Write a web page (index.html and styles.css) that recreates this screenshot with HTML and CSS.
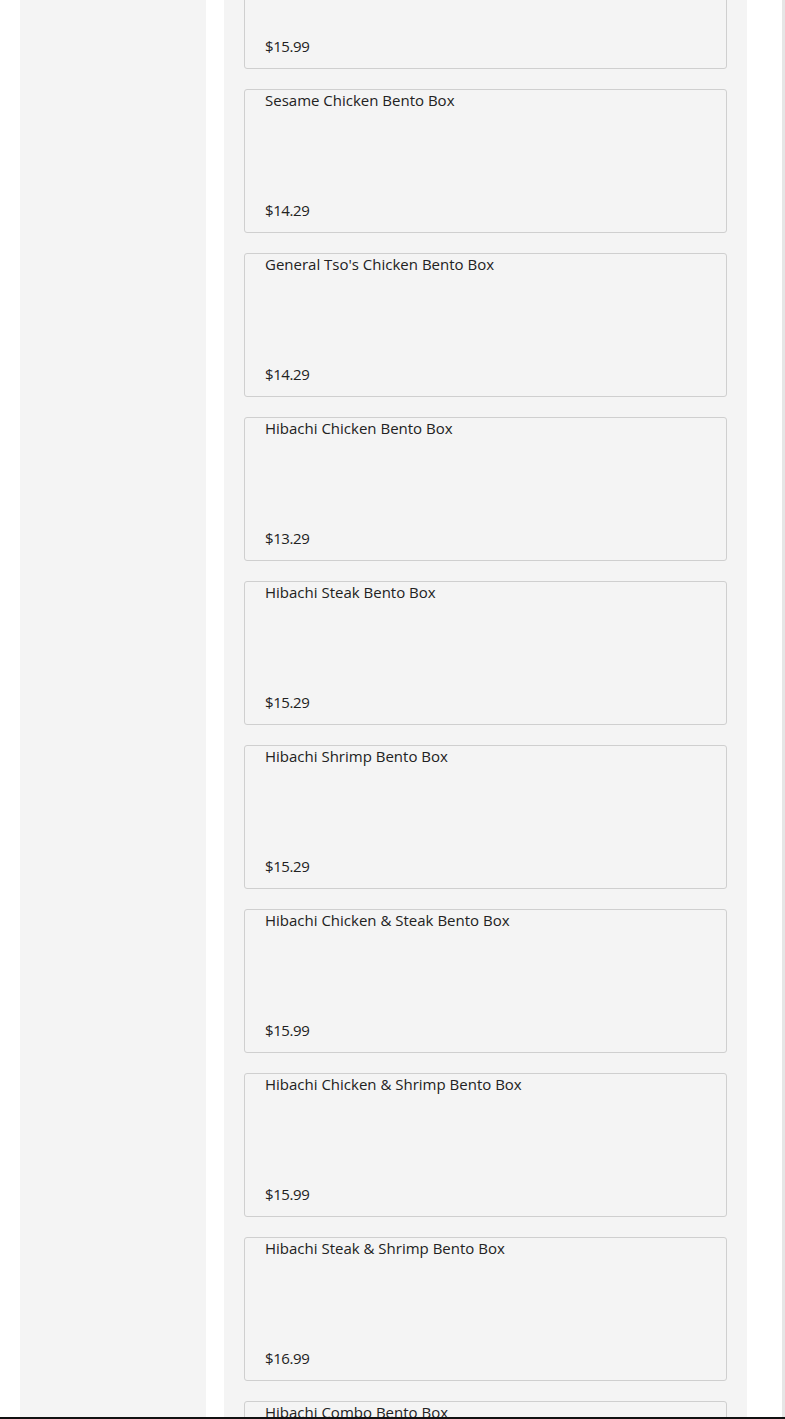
FILE: index.html
```html
<!DOCTYPE html>
<html lang="en">
<head>
    <meta charset="UTF-8">
    <title>Bento Boxes</title>
    <link rel="stylesheet" href="styles.css">
</head>
<body>
<div class="page">
    <aside class="sidebar"></aside>

    <main class="menu-section">
        <div class="item-list">
            <div class="item-card">
                <div class="item-name">Chicken &amp; Shrimp Bento Box</div>
                <div class="item-price">$15.99</div>
            </div>
            <div class="item-card">
                <div class="item-name">Sesame Chicken Bento Box</div>
                <div class="item-price">$14.29</div>
            </div>
            <div class="item-card">
                <div class="item-name">General Tso's Chicken Bento Box</div>
                <div class="item-price">$14.29</div>
            </div>
            <div class="item-card">
                <div class="item-name">Hibachi Chicken Bento Box</div>
                <div class="item-price">$13.29</div>
            </div>
            <div class="item-card">
                <div class="item-name">Hibachi Steak Bento Box</div>
                <div class="item-price">$15.29</div>
            </div>
            <div class="item-card">
                <div class="item-name">Hibachi Shrimp Bento Box</div>
                <div class="item-price">$15.29</div>
            </div>
            <div class="item-card">
                <div class="item-name">Hibachi Chicken &amp; Steak Bento Box</div>
                <div class="item-price">$15.99</div>
            </div>
            <div class="item-card">
                <div class="item-name">Hibachi Chicken &amp; Shrimp Bento Box</div>
                <div class="item-price">$15.99</div>
            </div>
            <div class="item-card">
                <div class="item-name">Hibachi Steak &amp; Shrimp Bento Box</div>
                <div class="item-price">$16.99</div>
            </div>
            <div class="item-card">
                <div class="item-name">Hibachi Combo Bento Box</div>
                <div class="item-price">$17.99</div>
            </div>
        </div>
    </main>

    <div class="edge"></div>
</div>
<div class="footer-line"></div>
</body>
</html>
```

FILE: styles.css
```css
html, body {
    margin: 0;
    padding: 0;
    background: #fff;
    overflow: hidden;
}
body {
    font-family: "Open Sans", "Liberation Sans", sans-serif;
    color: #222;
}

.page {
    display: flex;
    height: 1417px;
    padding-left: 20px;
    overflow: hidden;
}

.sidebar {
    width: 186px;
    flex: none;
    background: #f4f4f4;
}

.menu-section {
    width: 523px;
    flex: none;
    margin-left: 18px;
    background: #f4f4f4;
    overflow: hidden;
}

.item-list {
    display: flex;
    flex-direction: column;
    gap: 20px;
    margin-top: -75px;
    padding: 0 20px;
}

.item-card {
    height: 144px;
    box-sizing: border-box;
    display: flex;
    flex-direction: column;
    justify-content: space-between;
    border: 1px solid #cfcfcf;
    border-radius: 3px;
    padding: 0 20px 11px;
    background: #f4f4f4;
}

.item-name,
.item-price {
    font-size: 15px;
    line-height: 22px;
}
.item-name {
    margin-top: -1px;
}
.item-price {
    letter-spacing: -0.4px;
}

.edge {
    margin-left: auto;
    width: 3px;
    background: #e6e6e6;
}

.footer-line {
    height: 2px;
    background: #111;
}
```
